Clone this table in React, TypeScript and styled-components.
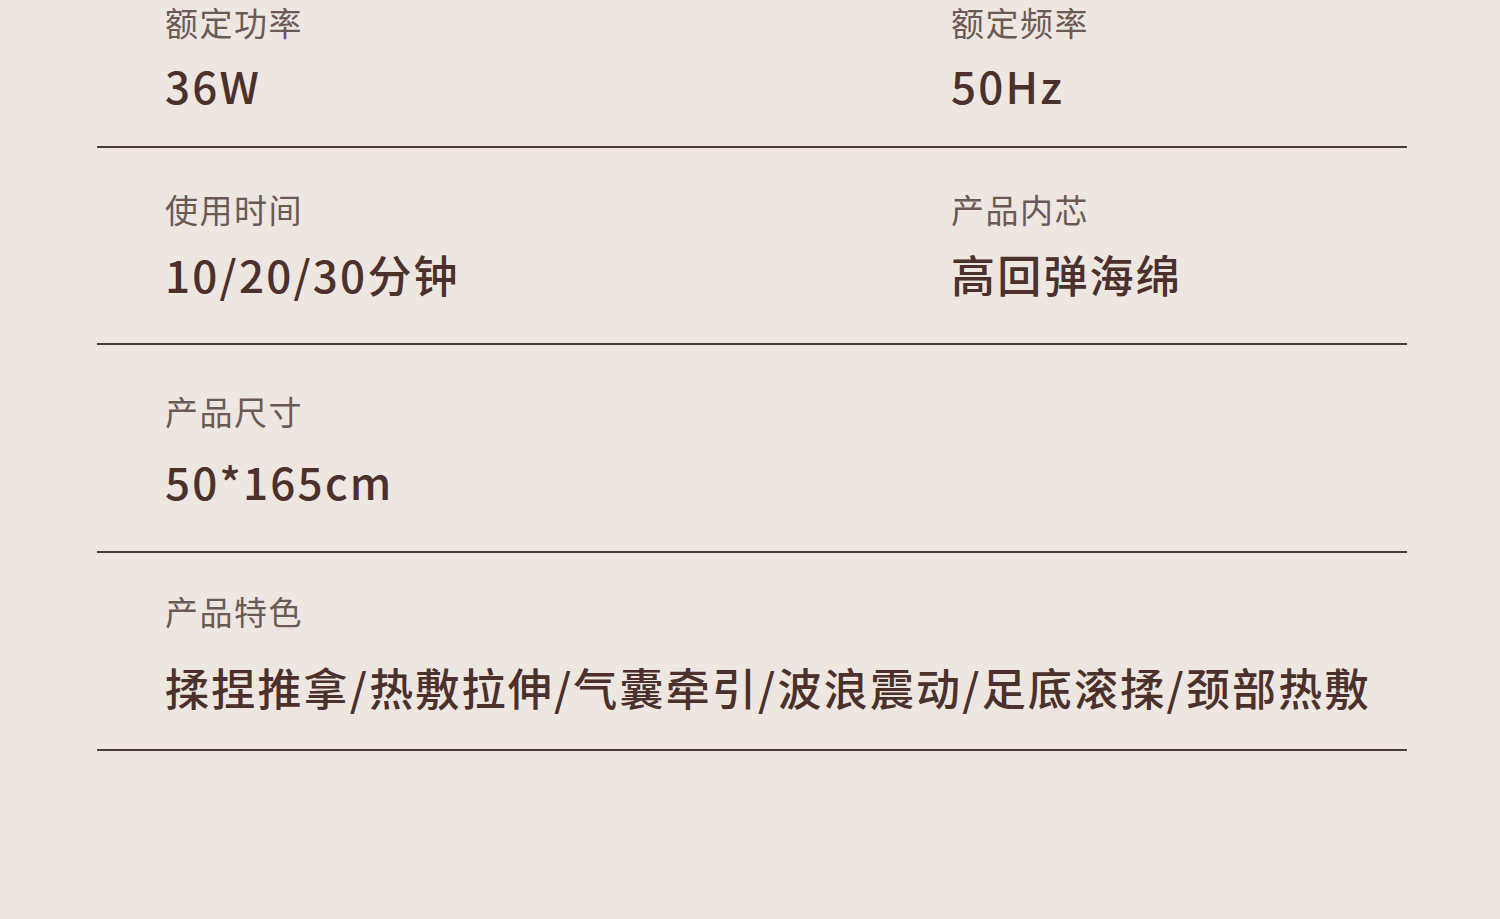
import React from "react";
import styled, { createGlobalStyle } from "styled-components";

const Global = createGlobalStyle`
  html, body { margin: 0; padding: 0; background: #eee7e1; }
  body { font-family: "Noto Sans CJK SC", "Noto Sans", sans-serif; }
`;

const Page = styled.div`
  width: 1500px;
  height: 919px;
  background: #eee7e1;
  padding: 0 0 0 97px;
  box-sizing: border-box;
  overflow: hidden;
`;

const Table = styled.div`
  width: 1310px;
  display: flex;
  flex-direction: column;
`;

const Row = styled.div<{ $pt: number; $gap: number; $pb: number }>`
  display: grid;
  grid-template-columns: 786px 1fr;
  padding: ${(p) => p.$pt}px 0 ${(p) => p.$pb}px;
  border-bottom: 2px solid #4a3b37;
  --gap: ${(p) => p.$gap}px;
`;

const Cell = styled.div`
  padding-left: 68px;
  display: flex;
  flex-direction: column;
  gap: var(--gap);
`;

const Label = styled.div`
  font-size: 33px;
  line-height: 40px;
  letter-spacing: 1.5px;
  color: #6a5955;
  white-space: nowrap;
`;

const Value = styled.div`
  font-size: 44px;
  line-height: 56px;
  font-weight: 500;
  letter-spacing: 2.2px;
  color: #4b302b;
  white-space: nowrap;
`;

type Item = { label: string; value: string };
type RowData = { items: Item[]; pt: number; gap: number; pb: number };

const rows: RowData[] = [
  { items: [{ label: "额定功率", value: "36W" }, { label: "额定频率", value: "50Hz" }], pt: 2, gap: 15, pb: 33 },
  { items: [{ label: "使用时间", value: "10/20/30分钟" }, { label: "产品内芯", value: "高回弹海绵" }], pt: 41, gap: 17, pb: 41 },
  { items: [{ label: "产品尺寸", value: "50*165cm" }], pt: 46, gap: 22, pb: 42 },
  { items: [{ label: "产品特色", value: "揉捏推拿/热敷拉伸/气囊牵引/波浪震动/足底滚揉/颈部热敷" }], pt: 38, gap: 28, pb: 34 },
];

export default function App() {
  return (
    <>
      <Global />
      <Page>
        <Table>
          {rows.map((r, i) => (
            <Row key={i} $pt={r.pt} $gap={r.gap} $pb={r.pb}>
              {r.items.map((it) => (
                <Cell key={it.label}>
                  <Label>{it.label}</Label>
                  <Value>{it.value}</Value>
                </Cell>
              ))}
            </Row>
          ))}
        </Table>
      </Page>
    </>
  );
}
